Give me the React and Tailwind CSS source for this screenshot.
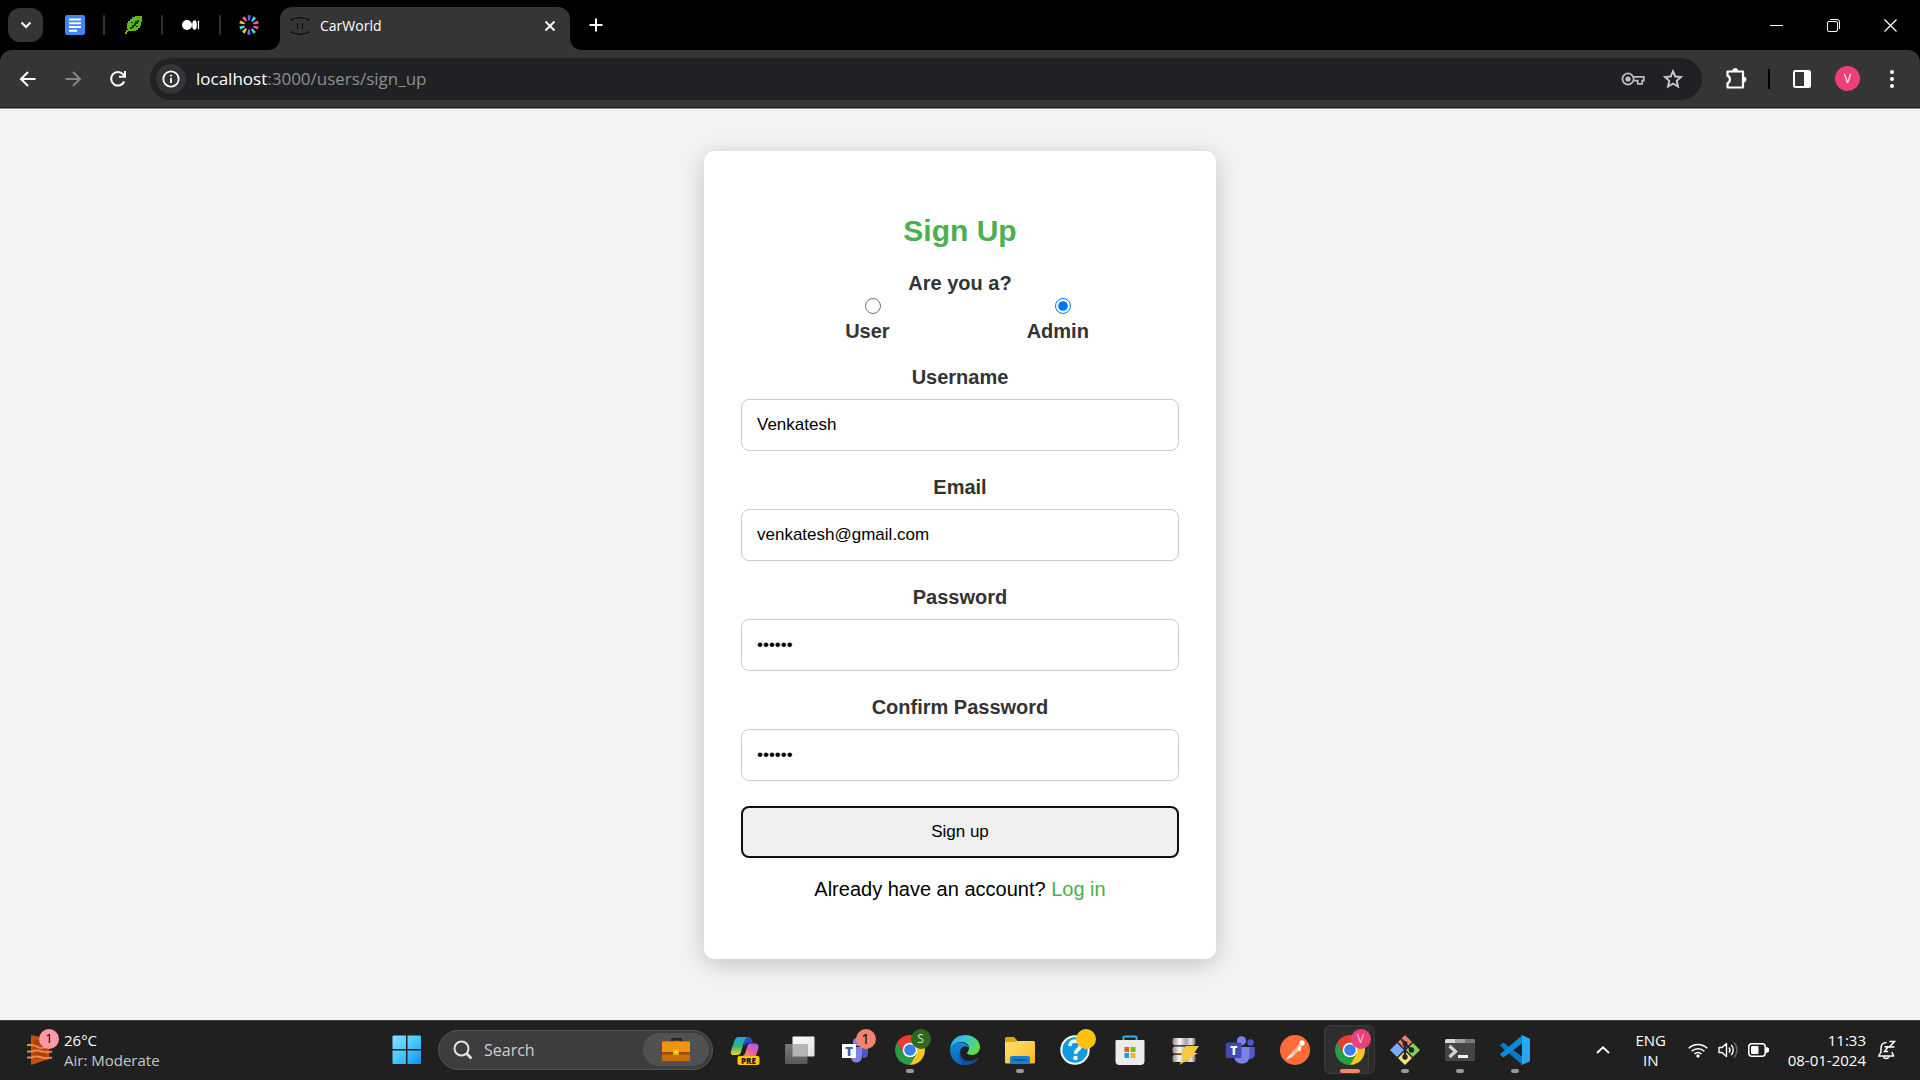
import React from "react";

const UI = "font-['Open_Sans','Noto_Sans',sans-serif]";

/* ---------- Browser chrome ---------- */

function DocsIcon() {
  return (
    <svg width="20" height="20" viewBox="0 0 20 20">
      <rect width="20" height="20" rx="2" fill="#4285f4" />
      <path d="M4 4.5h12M4 8.3h12M4 12h12M4 15.8h8" stroke="#fff" strokeWidth="1.9" />
    </svg>
  );
}

function LeafIcon() {
  return (
    <svg width="20" height="20" viewBox="0 0 20 20" shapeRendering="crispEdges">
      <path d="M12 1h7v6h-1v4h-1v2h-2v2h-2v1H5v1H4v2H2v-2h1v-2h2v-1H4V8h1V6h2V4h2V2h3z" fill="#5fb519" />
      <path d="M14 5h2v2h-1v2h-2v2h-2v2H9v1H7v-2h2v-2h2V8h1V6h2zM8 7h2v1H8zM13 11h2v1h-2z" fill="#14380a" />
    </svg>
  );
}

function MediumIcon() {
  return (
    <svg width="20" height="20" viewBox="0 0 20 20" fill="#fff">
      <circle cx="6" cy="10" r="5" />
      <ellipse cx="13.500" cy="10" rx="2.3" ry="4.8" />
      <rect x="16.800" y="5.7" width="1.3" height="8.6" rx="0.6" />
    </svg>
  );
}

const RAYS = ["#6b5cf6", "#39d5e8", "#ef5da8", "#f6559b", "#33e1e8", "#7468f5", "#ffc145", "#39e0e6", "#f9c13c", "#ff5fa5"];

function BurstIcon() {
  return (
    <svg width="20" height="20" viewBox="-10 -10 20 20">
      {RAYS.map((c, i) => (
        <path key={i} d="M-0.8 -4.5L-1.500 -9.7L1.700 -9.7L1 -4.5z" fill={c} transform={`rotate(${i * 36})`} />
      ))}
    </svg>
  );
}

function CarFavicon() {
  return (
    <svg width="20" height="20" viewBox="0 0 20 20" fill="none" stroke="#0d0d0d" strokeWidth="1.1">
      <path d="M1.5 5V3.5C3 2.4 5 2.4 7 2.5L8.5 1.6h3l1.5 .9c2-.1 4 0 5.500 1V5M1.500 15v1.500c1.500 1 3.500 1.100 5.500 1l1.500 .900h3l1.500-.900c2 .1 4 0 5.500-1V15M7.500 7v6M12.500 7v6" />
    </svg>
  );
}

function PinnedTab({ label, children, last }) {
  return (
    <>
      <button aria-label={label} className="grid h-8 w-9 place-items-center">{children}</button>
      {!last && <span className="mx-[10px] h-5 w-[2px] rounded bg-[#333333]" />}
    </>
  );
}

function WinIcon({ children }) {
  return (
    <svg width="13" height="13" viewBox="0 0 13 13" fill="none" stroke="#fff" strokeWidth="1">
      {children}
    </svg>
  );
}

function TabStrip() {
  return (
    <div className="flex h-[50px] bg-black text-white">
      <div className="flex items-center pl-2">
        <button aria-label="Search tabs" className="grid h-[34px] w-[35px] place-items-center rounded-xl bg-[#353535]">
          <svg width="12" height="8" viewBox="0 0 12 8" fill="none" stroke="#fff" strokeWidth="2"><path d="M1.500 1.500L6 6l4.500-4.500" /></svg>
        </button>
        <div className="ml-[14px] flex items-center">
          <PinnedTab label="Docs"><DocsIcon /></PinnedTab>
          <PinnedTab label="GeeksforGeeks"><LeafIcon /></PinnedTab>
          <PinnedTab label="Medium"><MediumIcon /></PinnedTab>
          <PinnedTab label="Burst" last><BurstIcon /></PinnedTab>
        </div>
      </div>
      <div className="ml-px flex items-end">
        <svg width="12" height="12" viewBox="0 0 12 12" fill="#353535"><path d="M12 0v12H0C7 12 12 7 12 0z" /></svg>
        <div className="flex h-[43px] w-[290px] items-center rounded-t-xl bg-[#353535] pb-[6px] pl-[10px] pr-[14px]">
          <CarFavicon />
          <span className={`${UI} ml-[10px] flex-1 text-[14px] leading-5`}>CarWorld</span>
          <button aria-label="Close tab">
            <svg width="12" height="12" viewBox="0 0 12 12" stroke="#fff" strokeWidth="1.8"><path d="M1.500 1.500l9 9M10.500 1.500l-9 9" /></svg>
          </button>
        </div>
        <svg width="12" height="12" viewBox="0 0 12 12" fill="#353535"><path d="M0 0v12h12C5 12 0 7 0 0z" /></svg>
      </div>
      <button aria-label="New tab" className="ml-[7px] self-center">
        <svg width="14" height="14" viewBox="0 0 14 14" stroke="#fff" strokeWidth="2"><path d="M7 0.500v13M0.500 7h13" /></svg>
      </button>
      <div className="ml-auto flex items-center pr-px">
        <button aria-label="Minimize" className="grid h-full w-[57px] place-items-center"><WinIcon><path d="M0 6.500h13" /></WinIcon></button>
        <button aria-label="Restore" className="grid h-full w-[57px] place-items-center">
          <WinIcon><rect x="0.500" y="2.500" width="10" height="10" rx="1.500" /><path d="M3 0.500h7a2.500 2.500 0 0 1 2.500 2.500v7" /></WinIcon>
        </button>
        <button aria-label="Close" className="grid h-full w-[57px] place-items-center"><WinIcon><path d="M0.500 0.500l12 12M12.500 0.500l-12 12" strokeWidth="1.300" /></WinIcon></button>
      </div>
    </div>
  );
}

function Toolbar() {
  return (
    <div className="bg-black">
      <div className="flex h-[58px] items-center rounded-t-xl border-b border-[#1c1c1c] bg-[#353535]">
        <div className="flex items-center gap-[25px] pl-[18px]">
          <button aria-label="Back">
            <svg width="20" height="20" viewBox="0 0 20 20" fill="none" stroke="#fff" strokeWidth="2"><path d="M17.500 10H3M10 3l-7 7 7 7" /></svg>
          </button>
          <button aria-label="Forward">
            <svg width="20" height="20" viewBox="0 0 20 20" fill="none" stroke="#858585" strokeWidth="2"><path d="M2.500 10H17M10 3l7 7-7 7" /></svg>
          </button>
          <button aria-label="Reload">
            <svg width="20" height="20" viewBox="0 0 20 20" fill="none" stroke="#fff" strokeWidth="2"><path d="M16.200 12.500A6.800 6.800 0 1 1 15 5.200l1.600 1.800" /><path d="M17 2v5.800h-6" /></svg>
          </button>
        </div>
        <div className="ml-[22px] flex h-[42px] flex-1 items-center rounded-full bg-[#202124] pl-[6px] pr-[19px]">
          <button aria-label="Site information" className="grid size-[30px] place-items-center rounded-full bg-[#353535]">
            <svg width="18" height="18" viewBox="0 0 18 18" fill="none" stroke="#fff" strokeWidth="1.800"><circle cx="9" cy="9" r="7.700" /><path d="M9 8v5M9 4.700v1.700" /></svg>
          </button>
          <div className={`${UI} ml-[10px] flex-1 text-[17px] leading-6 text-[#8e8f91]`}>
            <span className="text-white">localhost</span>:3000/users/sign_up
          </div>
          <button aria-label="Passwords">
            <svg width="24" height="16" viewBox="0 0 24 16" fill="none" stroke="#c0c0c1" strokeWidth="1.700">
              <circle cx="7" cy="8" r="5.600" /><circle cx="7" cy="8" r="2.600" fill="#c0c0c1" stroke="none" />
              <path d="M12.200 5.800h10.600v3.800h-1.600v3.300h-4.500V9.600h-4.500" />
            </svg>
          </button>
          <button aria-label="Bookmark" className="ml-[18px]">
            <svg width="20" height="20" viewBox="0 0 20 20" fill="none" stroke="#c9c9ca" strokeWidth="1.900">
              <path d="M10 2.200l2.300 5.300 5.700 .5-4.300 3.800 1.300 5.700-5-3-5 3 1.300-5.700L2 8l5.700-.5z" />
            </svg>
          </button>
        </div>
        <div className="flex items-center pl-[22px] pr-[18px]">
          <button aria-label="Extensions">
            <svg width="24" height="24" viewBox="0 0 24 24" fill="none" stroke="#fff" strokeWidth="2.200" strokeLinejoin="round">
              <path d="M3.500 4.500H19V20.500H3.500V16.200C6.500 15.800 6.800 9.300 3.500 8.800z" />
              <path d="M8.500 4a2.700 2.700 0 0 1 5.400 0zM19.500 9.800a2.700 2.700 0 0 1 0 5.400z" fill="#fff" strokeWidth="0.500" />
            </svg>
          </button>
          <span className="ml-5 h-5 w-[2px] bg-black" />
          <button aria-label="Side panel" className="ml-[22px]">
            <svg width="20" height="20" viewBox="0 0 20 20"><rect x="2" y="2" width="16" height="16" rx="1.500" fill="none" stroke="#fff" strokeWidth="2" /><path d="M12 2h6v16h-6z" fill="#fff" /></svg>
          </button>
          <button aria-label="Profile" className={`${UI} ml-[23px] grid size-[25px] place-items-center rounded-full bg-[#ec407a] text-[12px] leading-none text-white`}>V</button>
          <button aria-label="Menu" className="ml-[22px]">
            <svg width="20" height="20" viewBox="0 0 20 20" fill="#fff"><circle cx="10" cy="3" r="2" /><circle cx="10" cy="10" r="2" /><circle cx="10" cy="17" r="2" /></svg>
          </button>
        </div>
      </div>
    </div>
  );
}

/* ---------- Sign up form ---------- */

function Field({ id, label, type = "text", value }) {
  return (
    <div className="flex flex-col">
      <label htmlFor={id} className="text-center text-[20px] font-bold leading-6 text-[#333333]">{label}</label>
      <input
        id={id}
        type={type}
        defaultValue={value}
        className="mt-[10px] h-[52px] w-full rounded-lg border border-[#cccccc] bg-white px-[15px] text-[17px] text-black outline-none"
      />
    </div>
  );
}

function Role({ id, label, checked }) {
  return (
    <div className="flex flex-col items-center">
      <input id={id} type="radio" name="role" defaultChecked={checked} className="ml-[11px] mt-[3px] size-4" />
      <label htmlFor={id} className="mt-[5px] text-[20px] font-bold leading-6 text-[#333333]">{label}</label>
    </div>
  );
}

function SignUp() {
  return (
    <main className="flex flex-1 flex-col items-center border-t border-[#8a8a8a] bg-[#f3f3f3] pt-[42px] font-['Liberation_Sans',Arial,sans-serif]">
      <form className="w-full max-w-[512px] rounded-[10px] bg-white px-[37px] pb-[58px] pt-[62px] shadow-[0_5px_25px_rgba(0,0,0,0.2)]" onSubmit={(e) => e.preventDefault()}>
        <h2 className="text-center text-[30px] font-bold leading-9 text-[#4caf50]">Sign Up</h2>
        <fieldset className="mt-[22px]">
          <legend className="w-full text-center text-[20px] font-bold leading-6 text-[#333333]">Are you a?</legend>
          <div className="flex justify-center gap-[137px] pl-[14px]">
            <Role id="role-user" label="User" />
            <Role id="role-admin" label="Admin" checked />
          </div>
        </fieldset>
        <div className="mt-[22px] flex flex-col gap-6">
          <Field id="username" label="Username" value="Venkatesh" />
          <Field id="email" label="Email" type="email" value="venkatesh@gmail.com" />
          <Field id="password" label="Password" type="password" value="secret" />
          <Field id="confirm" label="Confirm Password" type="password" value="secret" />
        </div>
        <button type="submit" className="mt-[25px] h-[52px] w-full rounded-lg border-2 border-[#101010] bg-[#efefef] text-[17px] text-black">Sign up</button>
        <p className="mt-[19px] text-center text-[20px] leading-6 text-black">
          Already have an account? <a href="#login" className="text-[#4caf50]">Log in</a>
        </p>
      </form>
    </main>
  );
}

/* ---------- Taskbar ---------- */

function WindowsLogo() {
  return (
    <svg width="30" height="30" viewBox="0 0 30 30">
      <defs>
        <linearGradient id="win" x1="0" y1="0" x2="1" y2="1" gradientUnits="objectBoundingBox"><stop stopColor="#8be0fb" /><stop offset=".5" stopColor="#46c8fb" /><stop offset="1" stopColor="#0a93f5" /></linearGradient>
      </defs>
      <path fill="url(#win)" d="M1.500 .5H14v13.500H.5V1.500a1 1 0 0 1 1-1zM15.500 .5H28a1 1 0 0 1 1 1V14H15.500zM.5 15.500H14V29H1.500a1 1 0 0 1-1-1zM15.500 15.500H29V28a1 1 0 0 1-1 1H15.500z" />
    </svg>
  );
}

function WeatherIcon() {
  return (
    <svg width="26" height="30" viewBox="0 0 26 30">
      <path d="M4 0L22 4v20L4 30z" fill="#c4500f" />
      <path d="M7 4l12 3v15L7 25z" fill="#a8430b" />
      <g fill="none" stroke="#f0854a" strokeWidth="2">
        <path d="M0 10h5c4 0 5 3 9 3s6-2 11-1" /><path d="M0 16.500h5c4-2 7-1 10 0s6 1 10 0" /><path d="M0 22.500h5c4-2 7-1 10 0s6 1 10 0" />
      </g>
    </svg>
  );
}

function Briefcase() {
  return (
    <svg width="28" height="24" viewBox="0 0 28 24">
      <path d="M10 4V2.500a1.500 1.500 0 0 1 1.500-1.500h6A1.500 1.500 0 0 1 19 2.500V4" fill="none" stroke="#2a2622" strokeWidth="2.500" />
      <rect y="3.500" width="28" height="19.500" rx="1" fill="#c96f08" />
      <path d="M0 4.500a1 1 0 0 1 1-1h26a1 1 0 0 1 1 1V14H0z" fill="#f09410" />
      <path d="M0 14h28v2.500H0z" fill="#9c4d05" />
      <rect x="11" y="11" width="6" height="6" rx="1" fill="#f2b705" /><rect x="13" y="12.500" width="2.500" height="2.500" fill="#fff05a" />
    </svg>
  );
}

function Copilot() {
  return (
    <svg width="30" height="30" viewBox="0 0 30 30">
      <defs>
        <linearGradient id="cpa" x1="0" y1="0" x2="0" y2="1"><stop stopColor="#1aa7ec" /><stop offset=".5" stopColor="#2fb57a" /><stop offset="1" stopColor="#f2d21c" /></linearGradient>
        <linearGradient id="cpb" x1="1" y1="0" x2="0" y2="1"><stop stopColor="#9b5cf0" /><stop offset=".6" stopColor="#ef5f9c" /><stop offset="1" stopColor="#f9a05c" /></linearGradient>
      </defs>
      <path d="M14 2h4c3 0 4 2 5 6h-5c-2 0-3 1-4 4z" fill="#2050c8" />
      <path d="M9 2h9c-2 0-3 2-4 5l-3 10c-.7 2-1.700 3-4 3H3.500C.5 20 .3 18 1.300 15l3-9C5.200 3.300 6.500 2 9 2z" fill="url(#cpa)" />
      <path d="M20 8.500h5c3 0 4 2 3.300 5L26 21H12c2 0 2.500-1 3.200-3l2.300-7c.5-1.800 1-2.500 2.500-2.500z" fill="url(#cpb)" />
      <rect x="7.500" y="21" width="22" height="9" rx="2" fill="#fcc60e" />
      <text x="18.500" y="28.500" textAnchor="middle" fontSize="8" fontWeight="800" fontFamily="Open Sans, sans-serif" fill="#1b1b1b">PRE</text>
    </svg>
  );
}

function TaskView() {
  return (
    <svg width="30" height="30" viewBox="0 0 30 30">
      <defs>
        <linearGradient id="tva" x1="0" y1="0" x2="1" y2="1"><stop stopColor="#ffffff" /><stop offset="1" stopColor="#dedede" /></linearGradient>
        <linearGradient id="tvb" x1="0" y1="0" x2="0" y2="1"><stop stopColor="#7a7a7a" /><stop offset="1" stopColor="#585858" /></linearGradient>
      </defs>
      <rect x="7.500" y="1.500" width="22" height="20" rx="1" fill="url(#tva)" />
      <rect x="0" y="9" width="22.500" height="20" rx="1" fill="url(#tvb)" />
      <path d="M7.500 9h15v12.500h-15z" fill="#b4b4b4" />
    </svg>
  );
}

function TeamsClassic() {
  return (
    <svg width="30" height="30" viewBox="0 0 30 30">
      <circle cx="17" cy="7" r="4" fill="#7b83eb" />
      <path d="M21 12h7v6c0 3-2 5-5 5z" fill="#5059c9" />
      <path d="M10 12h12v9c0 4-2 6.500-5.500 6.500S11 25 11 22z" fill="#7b83eb" />
      <rect x="2" y="9" width="14" height="14" fill="#fff" />
      <text x="9" y="20.500" textAnchor="middle" fontSize="13" fontWeight="800" fontFamily="Open Sans, sans-serif" fill="#4b53bc">T</text>
    </svg>
  );
}

function Teams() {
  return (
    <svg width="30" height="30" viewBox="0 0 30 30">
      <circle cx="25.500" cy="7.500" r="3.200" fill="#5059c9" />
      <path d="M22 12h7.800v7c0 3.500-2.500 5.500-6 5z" fill="#4f58ca" />
      <circle cx="16.500" cy="5.800" r="4.600" fill="#7b83eb" />
      <path d="M8 12h16.500v9c0 5-3 7.500-7.500 7.500S9.500 26 9.500 22z" fill="#7b83eb" />
      <rect x=".8" y="7.500" width="15.700" height="15.500" rx="1.500" fill="#4249b0" />
      <text x="8.700" y="19.500" textAnchor="middle" fontSize="12" fontWeight="800" fontFamily="Open Sans, sans-serif" fill="#fff">T</text>
    </svg>
  );
}

function Chrome() {
  return (
    <svg width="30" height="30" viewBox="-15 -15 30 30">
      <path d="M0 -7.500H12.990A15 15 0 0 0 -12.990 -7.500L-6.500 3.750z" fill="#e8402f" />
      <path d="M-6.500 3.750L-12.990 -7.500A15 15 0 0 0 0 15L6.500 3.750z" fill="#259e48" />
      <path d="M6.500 3.750L0 15A15 15 0 0 0 12.990 -7.500H0z" fill="#fcc421" />
      <circle r="7.300" fill="#fff" />
      <circle r="5.800" fill="#3b7ded" />
    </svg>
  );
}

function Edge() {
  return (
    <svg width="30" height="30" viewBox="0 0 30 30">
      <defs>
        <linearGradient id="ea" x1="0" y1="0" x2="1" y2="0.500"><stop stopColor="#27a7e0" /><stop offset=".5" stopColor="#35c6d8" /><stop offset="1" stopColor="#62d948" /></linearGradient>
        <linearGradient id="eb" x1="0" y1="0" x2="0" y2="1"><stop stopColor="#1389d8" /><stop offset="1" stopColor="#0a62c0" /></linearGradient>
      </defs>
      <path d="M0 14C1 5 7 0 15 0c9 0 15 6 15 12 0 5-4 8-8 8-3 0-5-1-5-2s2-2 2-5c0-4-4-6-8-6C6 7 2 10 0 14z" fill="url(#ea)" />
      <path d="M0 14c2-5 6-6.500 10-6.500 5 0 8.500 2.500 8.800 5.500-1-1-2-1.500-3.500-1.500-3 0-5.300 2.500-5.300 6.500 0 6 5 11 10 11.200C18 30 16 30 15 30 6 30-.5 23 0 14z" fill="url(#eb)" />
      <path d="M10 17c0 6 4 9 9 9 4 0 7-1.500 8.500-3 .8-.5 1 .2.500 1C26 27 21 30 16 30 10 29 8 22 10 17z" fill="#1250a0" />
    </svg>
  );
}

function Folder() {
  return (
    <svg width="30" height="30" viewBox="0 0 30 30">
      <defs><linearGradient id="fo" x1="0" y1="0" x2="1" y2="1"><stop stopColor="#ffe17b" /><stop offset="1" stopColor="#fbb918" /></linearGradient></defs>
      <path d="M0 3.500A1.500 1.500 0 0 1 1.500 2H9l3 3v4H0z" fill="#e3a008" />
      <path d="M0 7h10l2-1h16.500A1.500 1.500 0 0 1 30 7.500v19.500a1.500 1.500 0 0 1-1.500 1.500h-27A1.500 1.500 0 0 1 0 27z" fill="url(#fo)" />
      <path d="M5 28.500V23a2 2 0 0 1 2-2h16a2 2 0 0 1 2 2v5.500z" fill="#1380d0" />
      <path d="M8.500 25h13" stroke="#0b4f90" strokeWidth="1.500" />
    </svg>
  );
}

function Help() {
  return (
    <svg width="30" height="30" viewBox="0 0 30 30">
      <circle cx="15" cy="15" r="13.700" fill="#109bdc" stroke="#fff" strokeWidth="2" />
      <path d="M10 11c0-3 2-5 5-5s5.200 2 5.200 4.700c0 4-4.700 4-4.700 8" fill="none" stroke="#fff" strokeWidth="3.600" />
      <circle cx="15.500" cy="23" r="2.300" fill="#fff" />
    </svg>
  );
}

function Store() {
  return (
    <svg width="30" height="30" viewBox="0 0 30 30">
      <path d="M8.500 6V2.500a1 1 0 0 1 1-1h11a1 1 0 0 1 1 1V6" fill="none" stroke="#27b5e8" strokeWidth="2" />
      <path d="M.5 6A1 1 0 0 1 1.500 5h27a1 1 0 0 1 1 1v20a4 4 0 0 1-4 4h-21a4 4 0 0 1-4-4z" fill="#ececec" />
      <path d="M9.500 12H14v5H9.500z" fill="#f25022" /><path d="M15.500 12h5v5h-5z" fill="#7fba00" />
      <path d="M9.500 18H14v5H9.500z" fill="#00a4ef" /><path d="M15.500 18h5v5h-5z" fill="#ffb900" />
    </svg>
  );
}

function Database() {
  return (
    <svg width="30" height="30" viewBox="0 0 30 30">
      <defs><linearGradient id="db"><stop stopColor="#8a8a8a" /><stop offset=".3" stopColor="#fafafa" /><stop offset=".6" stopColor="#a2a2a2" /><stop offset=".8" stopColor="#e8e8e8" /><stop offset="1" stopColor="#777" /></linearGradient></defs>
      <g fill="url(#db)"><rect x="2.500" y="3" width="23" height="7" rx="2" /><rect x="2.500" y="11.500" width="23" height="7" rx="2" /><rect x="2.500" y="20" width="23" height="7" rx="2" /></g>
      <path d="M4 10.700h20M4 19.200h20" stroke="#8e3a3a" strokeWidth="1" />
      <path d="M16 11h13l-5 7h4L9.500 30l4-9H10z" fill="#fbc93c" />
    </svg>
  );
}

function Postman() {
  return (
    <svg width="30" height="30" viewBox="0 0 30 30">
      <circle cx="15" cy="15" r="15" fill="#ff6c37" />
      <circle cx="22" cy="8" r="2.700" fill="#fff" />
      <path d="M19 9.500l2.500 2.500-1 4-3 .5-5.500 5.500-5 2.500-.7-.7 2-2.500 3.500-4 5-5z" fill="#ffece4" />
      <path d="M19 11.500L11 19M18 14.500l-5 5" stroke="#ff6c37" strokeWidth=".7" />
    </svg>
  );
}

function Git() {
  return (
    <svg width="30" height="30" viewBox="0 0 30 30">
      <path d="M15 0l7 7-7 7-7-7z" fill="#f77676" /><path d="M23 8l7 7-7 7-7-7z" fill="#80d35a" />
      <path d="M15 16l7 7-7 7-7-7z" fill="#fadf7b" /><path d="M7 8l7 7-7 7-7-7z" fill="#7baaf7" />
      <path d="M11 4l4 4v14M15 8.500l6.500 6.500" stroke="#252525" strokeWidth="2" fill="none" />
      <g fill="#252525"><circle cx="15" cy="8.500" r="2.500" /><circle cx="21.500" cy="15" r="2.700" /><circle cx="15" cy="22" r="2.700" /></g>
    </svg>
  );
}

function Terminal() {
  return (
    <svg width="30" height="30" viewBox="0 0 30 30">
      <rect y="4" width="30" height="22" rx="1.500" fill="#454545" />
      <path d="M0 8V5.500A1.500 1.500 0 0 1 1.500 4H10v4z" fill="#d6d6d6" /><path d="M10 4h10v4H10z" fill="#a2a2a2" /><path d="M20 4h8.500A1.500 1.500 0 0 1 30 5.500V8H20z" fill="#777" />
      <path d="M4.500 11l6 5.500-6 5.500" fill="none" stroke="#d5d5d5" strokeWidth="3.200" />
      <path d="M13 21.500h10" stroke="#f3f3f3" strokeWidth="3" />
    </svg>
  );
}

function VsCode() {
  return (
    <svg width="30" height="30" viewBox="0 0 30 30">
      <path d="M0.800 9.500L2.500 8a1.300 1.300 0 0 1 1.700 0L22 21.500V29.500L.8 11.400a1.300 1.300 0 0 1 0-1.900z" fill="#0b78c4" />
      <path d="M.8 20.500l1.700 1.500a1.300 1.300 0 0 0 1.700 0L22 8.500V.5L.8 18.600a1.300 1.300 0 0 0 0 1.900z" fill="#0b8ad8" />
      <path d="M22.300 .3l6.700 3a1.600 1.600 0 0 1 1 1.500v20.400a1.600 1.600 0 0 1-1 1.500l-6.700 3a1.500 1.500 0 0 1-1.300-.5c.5.300 1 0 1-.7V1.500c0-.7-.5-1-1-.7a1.500 1.500 0 0 1 1.300-.5z" fill="#27a7f2" />
    </svg>
  );
}

function TaskbarApp({ label, children, badge, badgeClass, running, active }) {
  return (
    <button aria-label={label} className="relative grid h-full w-[55px] place-items-center">
      {active && (
        <>
          <span className="absolute inset-y-1 right-[2px] w-10 rounded-md border border-[#383838] bg-[#2b2b2b]" />
          <span className="absolute inset-y-1 left-[2px] w-[45px] rounded-md border border-[#3c3c3c] bg-[#2f2f2f]" />
        </>
      )}
      <span className="relative">
        {children}
        {badgeClass && (
          <span className={`${UI} absolute -right-[6px] -top-[6px] grid size-5 place-items-center rounded-full leading-none ${badgeClass}`}>{badge}</span>
        )}
      </span>
      {running && <span className="absolute bottom-[5px] h-1 w-2 rounded-full bg-[#999999]" />}
      {active && <span className="absolute bottom-[5px] h-1 w-5 rounded-full bg-[#f98367]" />}
    </button>
  );
}

function Taskbar() {
  return (
    <footer className={`${UI} grid h-[60px] grid-cols-[1fr_auto_1fr] items-stretch border-t border-[#3d4040] bg-[#202020] pb-[2px] text-[15px] leading-5 text-white`}>
      <button className="flex items-center pl-[27px] text-left">
        <span className="relative">
          <WeatherIcon />
          <span className="absolute -right-[6px] -top-[6px] grid size-5 place-items-center rounded-full bg-[#ff99a4] text-[13px] leading-none text-black">1</span>
        </span>
        <span className="ml-[11px] flex flex-col">
          <span>26°C</span>
          <span className="text-[#c8c8c8]">Air: Moderate</span>
        </span>
      </button>

      <div className="flex items-center pl-px">
        <button aria-label="Start" className="grid h-full w-[55px] place-items-center"><WindowsLogo /></button>
        <div className="mx-1 flex h-10 w-[275px] items-center rounded-full border border-[#535353] bg-[#3d3d3d] pl-[14px] pr-[3px]">
          <svg width="20" height="20" viewBox="0 0 20 20" fill="none" stroke="#e4e4e4" strokeWidth="2"><circle cx="8.500" cy="8.500" r="7" /><path d="M13.500 13.500l5 5" strokeWidth="2.500" /></svg>
          <input aria-label="Search" placeholder="Search" className="ml-[11px] w-0 flex-1 bg-transparent text-[16px] text-white outline-none placeholder:text-[#cfcfcf]" />
          <button aria-label="Search highlights" className="grid h-[33px] w-[66px] place-items-center rounded-full bg-[#515151]"><Briefcase /></button>
        </div>
        <TaskbarApp label="Copilot"><Copilot /></TaskbarApp>
        <TaskbarApp label="Task view"><TaskView /></TaskbarApp>
        <TaskbarApp label="Teams classic" badge="1" badgeClass="bg-[#f7826b] text-[15px] text-black"><TeamsClassic /></TaskbarApp>
        <TaskbarApp label="Chrome" badge="S" badgeClass="bg-[#2f6a1c] text-[12px] text-[#dddddd]" running><Chrome /></TaskbarApp>
        <TaskbarApp label="Edge"><Edge /></TaskbarApp>
        <TaskbarApp label="File Explorer" running><Folder /></TaskbarApp>
        <TaskbarApp label="Get Help" badgeClass="bg-[#ffc20e]"><Help /></TaskbarApp>
        <TaskbarApp label="Microsoft Store"><Store /></TaskbarApp>
        <TaskbarApp label="Database"><Database /></TaskbarApp>
        <TaskbarApp label="Teams"><Teams /></TaskbarApp>
        <TaskbarApp label="Postman"><Postman /></TaskbarApp>
        <TaskbarApp label="Chrome profile V" badge="V" badgeClass="bg-[#ec407a] text-[12px] text-[#f3d3de]" active><Chrome /></TaskbarApp>
        <TaskbarApp label="Git" running><Git /></TaskbarApp>
        <TaskbarApp label="Terminal" running><Terminal /></TaskbarApp>
        <TaskbarApp label="Visual Studio Code" running><VsCode /></TaskbarApp>
      </div>

      <div className="flex items-center justify-end pr-6">
        <button aria-label="Show hidden icons">
          <svg width="14" height="8" viewBox="0 0 14 8" fill="none" stroke="#fff" strokeWidth="1.800"><path d="M1 7l6-5.700L13 7" /></svg>
        </button>
        <button className="ml-[25px] w-8 text-center">ENG<br />IN</button>
        <div className="ml-[21px] flex items-center gap-[10px]">
          <svg width="20" height="16" viewBox="0 0 20 16" fill="none" stroke="#fff" strokeWidth="1.600">
            <path d="M.8 6.300a13 13 0 0 1 18.400 0M3.700 9.300a9 9 0 0 1 12.600 0M6.500 12a5 5 0 0 1 7 0" /><circle cx="10" cy="14" r="1.700" fill="#fff" stroke="none" />
          </svg>
          <svg width="20" height="18" viewBox="0 0 20 18" fill="none" stroke="#fff" strokeWidth="1.400">
            <path d="M1 6.500h3L8.500 2.500v13L4 11.500H1z" strokeLinejoin="round" /><path d="M11 6.500a4 4 0 0 1 0 5M13.300 4a7.500 7.500 0 0 1 0 10" /><path d="M16 1.500a11 11 0 0 1 0 15" stroke="#666" />
          </svg>
          <svg width="21" height="14" viewBox="0 0 21 14"><rect x=".8" y=".8" width="16.400" height="12.400" rx="3" fill="none" stroke="#fff" strokeWidth="1.500" /><rect x="3" y="3" width="7.500" height="8" rx="1" fill="#fff" /><path d="M18.500 4.500a2 2 0 0 1 0 5z" fill="#fff" stroke="#fff" /></svg>
        </div>
        <div className="ml-[19px] text-right">11:33<br />08-01-2024</div>
        <button aria-label="Notifications" className="ml-[11px]">
          <svg width="19" height="20" viewBox="0 0 19 20" fill="none" stroke="#fff" strokeWidth="1.500">
            <path d="M9.500 2.500C6 2.500 4 5 4 8v4l-2.300 4h15L14.800 12" strokeLinejoin="round" /><path d="M6.500 16.500a2.800 2.800 0 0 0 5.400 0" />
            <path d="M7.500 6.800h3.600l-3.600 4.700h3.600M12.500 1.500h5l-5 5.500h5" />
          </svg>
        </button>
      </div>
    </footer>
  );
}

export default function App() {
  return (
    <div className="flex min-h-screen flex-col">
      <TabStrip />
      <Toolbar />
      <SignUp />
      <Taskbar />
    </div>
  );
}
